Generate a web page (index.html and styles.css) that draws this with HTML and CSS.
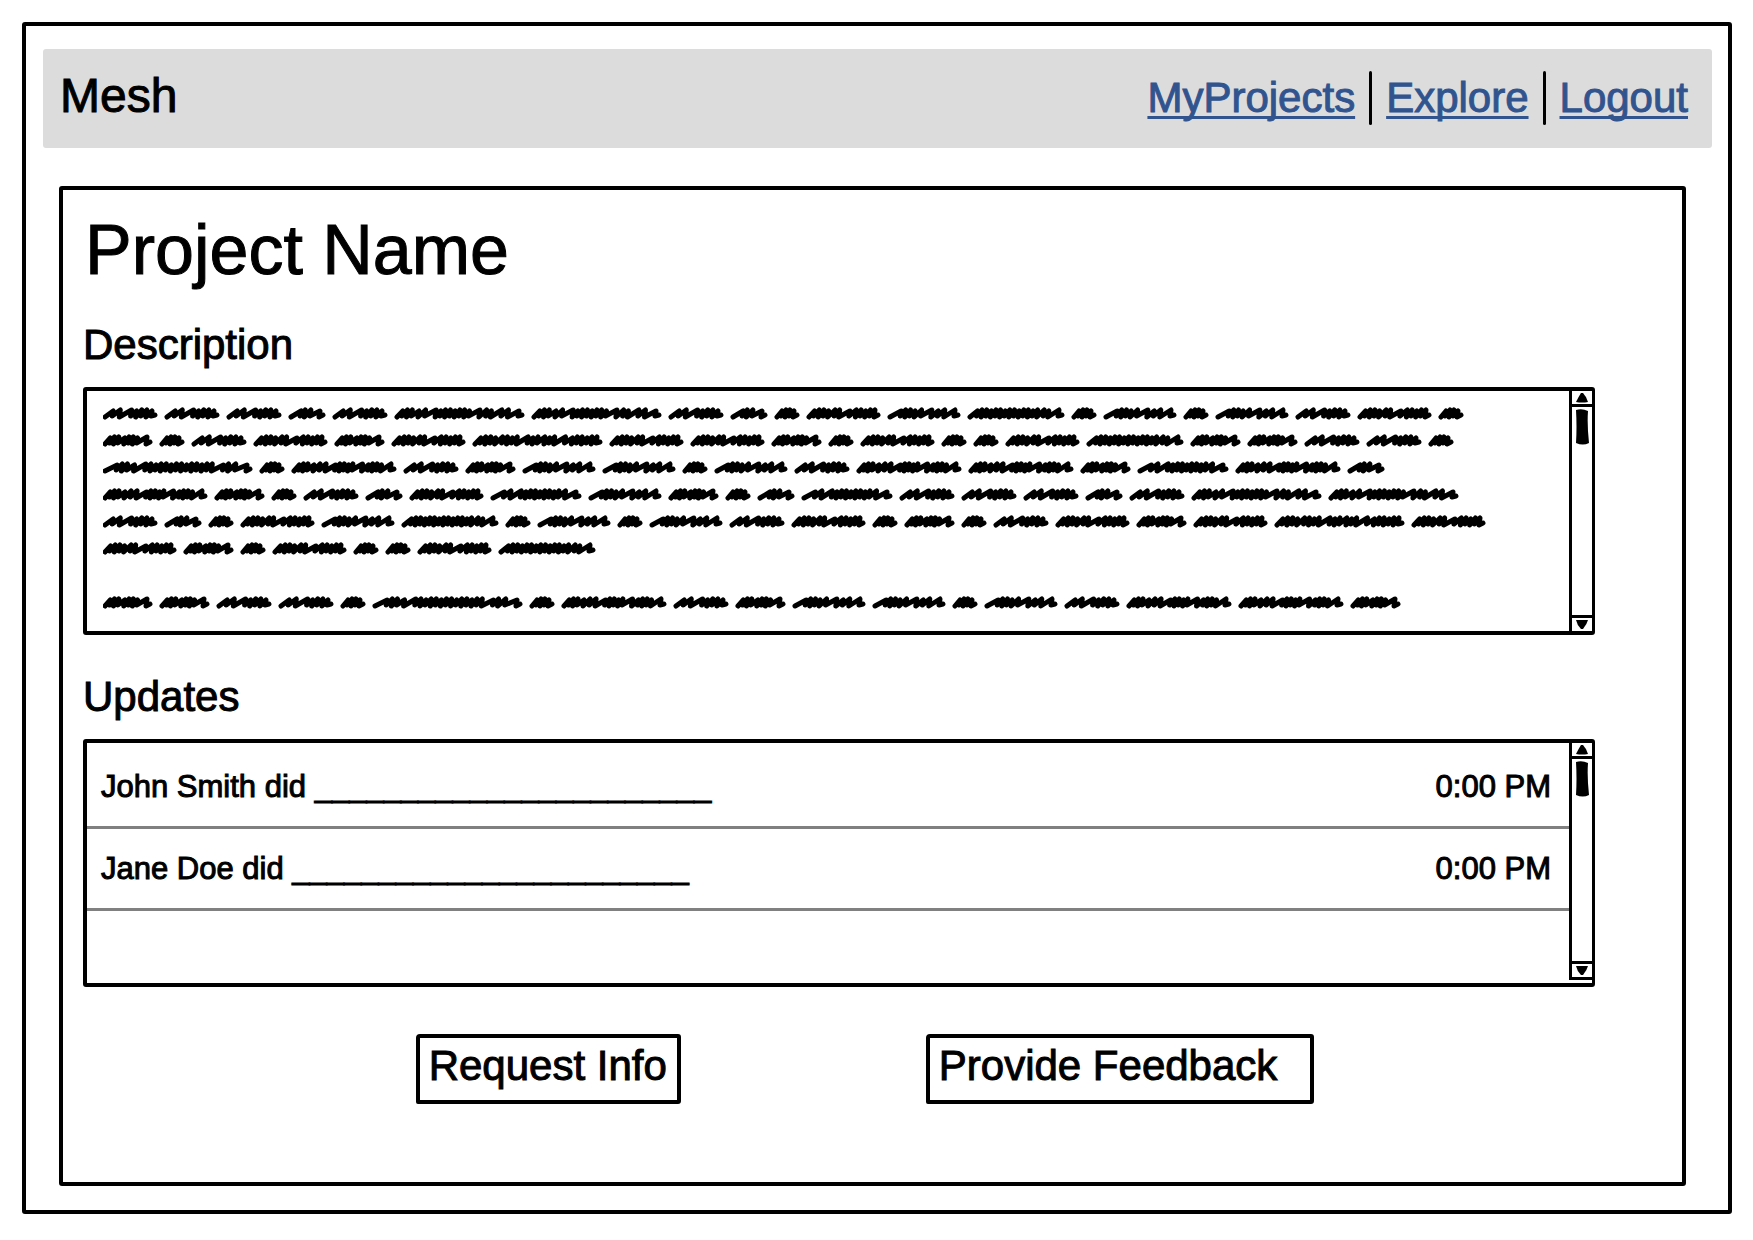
FILE: index.html
```html
<!DOCTYPE html>
<html lang="en">
<head>
<meta charset="utf-8">
<meta name="viewport" content="width=device-width, initial-scale=1">
<title>Mesh</title>
<link rel="stylesheet" href="styles.css">
</head>
<body>
<div class="frame">
  <header class="topbar">
    <div class="brand">Mesh</div>
    <nav class="nav" aria-label="Main">
      <a href="#projects">MyProjects</a>
      <span class="divider"></span>
      <a href="#explore">Explore</a>
      <span class="divider"></span>
      <a href="#logout">Logout</a>
    </nav>
  </header>

  <main class="project">
    <h1>Project Name</h1>

    <h2>Description</h2>
    <section class="panel" aria-label="Description">
      <div class="scribble" id="scribble"></div>
      <div class="scrollbar">
        <button class="arrow up" type="button" aria-label="Scroll up"><svg width="12" height="10" viewBox="0 0 12 10"><path d="M0 9 Q3 3 5 0 L7 0 Q10 3 12 9 Q6 10 0 9Z"/></svg></button>
        <div class="track"><svg class="thumb" width="13" height="36" viewBox="0 0 13 36"><path d="M0 1 Q6 -1 12 2 Q11 16 13 34 Q7 37 0 34 Q1 18 0 1Z"/></svg></div>
        <button class="arrow down" type="button" aria-label="Scroll down"><svg width="12" height="10" viewBox="0 0 12 10"><path d="M0 0 L12 0 Q11 4 7 9 L5 9 Q1 5 0 0Z"/></svg></button>
      </div>
    </section>

    <h2>Updates</h2>
    <section class="panel" aria-label="Updates">
      <ul class="updates">
        <li><span>John Smith did _______________________</span><time>0:00 PM</time></li>
        <li><span>Jane Doe did _______________________</span><time>0:00 PM</time></li>
      </ul>
      <div class="scrollbar inset">
        <button class="arrow up" type="button" aria-label="Scroll up"><svg width="12" height="10" viewBox="0 0 12 10"><path d="M0 9 Q3 3 5 0 L7 0 Q10 3 12 9 Q6 10 0 9Z"/></svg></button>
        <div class="track"><svg class="thumb" width="13" height="36" viewBox="0 0 13 36"><path d="M0 1 Q6 -1 12 2 Q11 16 13 34 Q7 37 0 34 Q1 18 0 1Z"/></svg></div>
        <button class="arrow down" type="button" aria-label="Scroll down"><svg width="12" height="10" viewBox="0 0 12 10"><path d="M0 0 L12 0 Q11 4 7 9 L5 9 Q1 5 0 0Z"/></svg></button>
      </div>
    </section>

    <div class="actions">
      <button class="action" type="button">Request Info</button>
      <button class="action wide" type="button">Provide Feedback</button>
    </div>
  </main>
</div>
<script src="scribble.js"></script>
</body>
</html>
```
FILE: styles.css
```css
* {
  box-sizing: border-box;
}

body {
  margin: 0;
  background: #fff;
  color: #000;
  font-family: "Liberation Sans", Arial, sans-serif;
  -webkit-text-stroke: 1px currentColor;
}

h1,
h2,
ul {
  margin: 0;
  padding: 0;
  font-weight: 400;
}

.frame {
  margin: 22px 21px 25px 22px;
  padding: 23px 16px 24px 17px;
  border: 4px solid #000;
  border-radius: 3px;
}

.topbar {
  display: flex;
  align-items: baseline;
  justify-content: space-between;
  padding: 19px 24px 23px 17px;
  background: #dcdcdc;
  border-radius: 3px;
}

.brand {
  font-size: 48px;
  line-height: 56px;
}

.nav {
  display: flex;
  align-items: center;
  gap: 14px;
  font-size: 42px;
  line-height: 48px;
}

.nav a {
  color: #31548f;
  text-decoration: underline;
  text-decoration-thickness: 3px;
  text-decoration-skip-ink: none;
  text-underline-offset: 4px;
}

.divider {
  width: 3px;
  height: 54px;
  background: #000;
  border-radius: 2px;
}

.project {
  margin: 38px 26px 0 16px;
  padding: 20px 87px 78px 20px;
  border: 4px solid #000;
  border-radius: 3px;
}

h1 {
  padding-left: 2px;
  font-size: 70px;
  line-height: 80px;
}

h2 {
  margin: 38px 0 18px;
  font-size: 42px;
  line-height: 48px;
}

h1 + h2 {
  margin-top: 31px;
}

.panel {
  display: grid;
  grid-template-columns: 1fr 23px;
  min-height: 248px;
  border: 4px solid #000;
  border-right-width: 3px;
  border-radius: 3px;
}

.scribble {
  padding: 9px 0 15px 16px;
  min-width: 0;
  overflow: hidden;
}

.scribble svg {
  display: block;
  fill: none;
  stroke: #000;
  stroke-width: 5;
  stroke-linecap: round;
  stroke-linejoin: round;
}

.scrollbar {
  display: flex;
  flex-direction: column;
  border-left: 3px solid #000;
}

.scrollbar.inset {
  margin-bottom: 3px;
  border-bottom: 3px solid #000;
}

.arrow {
  display: flex;
  align-items: center;
  justify-content: center;
  height: 16px;
  padding: 0;
  border: 0 solid #000;
  background: none;
}

.arrow.up {
  border-bottom-width: 3px;
}

.arrow.down {
  border-top-width: 3px;
}

.track {
  flex: 1;
  padding: 2px 4px;
}

.thumb {
  display: block;
}

.updates {
  padding-top: 4px;
  list-style: none;
  font-size: 31px;
  line-height: 36px;
}

.updates li {
  display: flex;
  justify-content: space-between;
  padding: 22px 18px 21px 14px;
  border-bottom: 3px solid #808080;
}

.actions {
  display: flex;
  gap: 245px;
  margin-top: 47px;
  padding-left: 22%;
}

.action {
  padding: 4px 10px 10px 9px;
  border: 4px solid #000;
  border-radius: 4px 3px 3px 2px;
  background: none;
  color: inherit;
  font: inherit;
  font-size: 42px;
  line-height: 48px;
  text-align: left;
  white-space: nowrap;
  -webkit-text-stroke: inherit;
}

.action.wide {
  min-width: 388px;
}
```
FILE: scribble.js
```js
// Each word is a run of pen strokes: d = dense, o = open, w = wide.
const words = {
  A: [54, "oowdddd"],
  B: [49, "dddodddw"],
  D: [36, "wdow"],
  E: [24, "dddd"],
  F: [129, "dddoowdddddddwodwow"],
  G: [73, "ddddodwodddd"],
  H: [72, "wdddowoow"],
  I: [96, "odddddddddddddodw"],
  J: [149, "wddowdddddddddddddwdow"],
  K: [104, "dddooowddddwodddw"],
  L: [90, "wowddddddddow"],
  M: [129, "ddddodddwddoddwoddddd"]
};

const lines = [
  "AAADAFFADEGHIEHEHAGE",
  "BEAGBGMGGBEGEEGIBBAAE",
  "JEKABHHEHAKKBLKD",
  "KBEADGLHBEDLAAADAFF",
  "ADEGHIEHEHAGEBEAGBGMG",
  "GBEGEEGI",
  "",
  "BBAAEJEKABHHEHAKKB"
];

const advance = { d: 5, o: 7, w: 11 };
const gap = 8;

function wordPath(start, width, strokes) {
  const total = [...strokes].reduce((sum, s) => sum + advance[s], 0);
  const scale = (width - 8) / total;
  let x = start + 2;
  let d = `M${x} 17`;
  [...strokes].forEach((s, i) => {
    const step = advance[s] * scale;
    const low = i % 2 ? 17 : 16;
    const high = i % 3 ? 10 : 11;
    d += `L${(x + step + 1).toFixed(1)} ${high}L${(x + step).toFixed(1)} ${low}`;
    x += step;
  });
  return d + `L${(x + 4).toFixed(1)} 15`;
}

const host = document.getElementById("scribble");
host.innerHTML = lines.map(line => {
  let x = 0;
  let d = "";
  for (const key of line) {
    const [width, strokes] = words[key];
    d += wordPath(x, width, strokes);
    x += width + gap;
  }
  return `<svg width="${x}" height="27" aria-hidden="true"><path d="${d}"/></svg>`;
}).join("");
```
